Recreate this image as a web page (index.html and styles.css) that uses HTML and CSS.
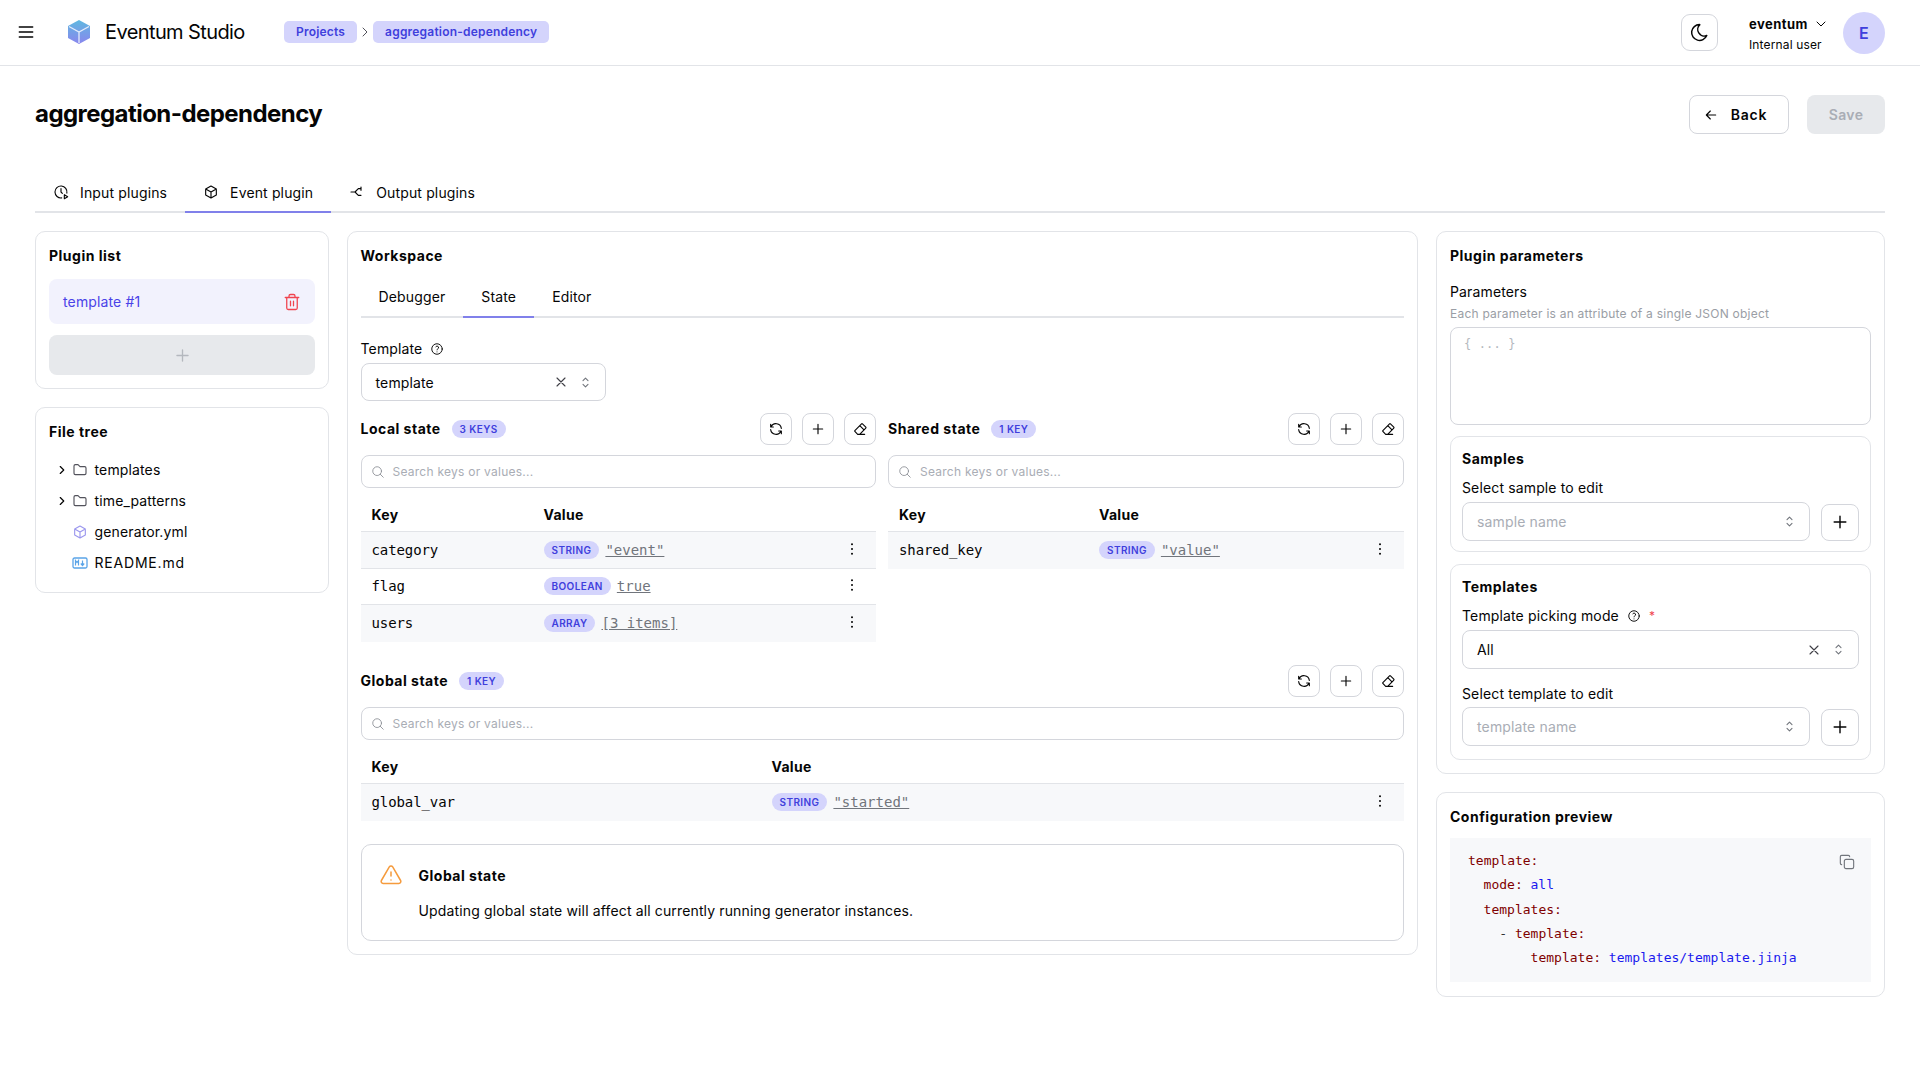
FILE: index.html
```html
<!DOCTYPE html>
<html lang="en">
<head>
<meta charset="utf-8">
<title>Eventum Studio</title>
<link rel="stylesheet" href="styles.css">
</head>
<body>

<!-- icon set -->
<svg class="defs" width="0" height="0">
  <defs>
    <linearGradient id="cube-grad" x1="0" y1="0" x2="0" y2="1">
      <stop offset="0" stop-color="#5fb8e0"/>
      <stop offset="1" stop-color="#8a86ee"/>
    </linearGradient>
  </defs>
  <symbol id="i-plus" viewBox="0 0 24 24"><path d="M12 5v14M5 12h14"/></symbol>
  <symbol id="i-refresh" viewBox="0 0 24 24"><path d="M20 11a8.100 8.100 0 0 0-15.500-2M4 5v4h4M4 13a8.100 8.100 0 0 0 15.500 2M20 19v-4h-4"/></symbol>
  <symbol id="i-eraser" viewBox="0 0 24 24"><path d="M19 20H8.500l-4.210-4.300a1 1 0 0 1 0-1.410l10-10a1 1 0 0 1 1.410 0l5 5a1 1 0 0 1 0 1.410L11.500 20M18 13.300 11.700 7"/></symbol>
  <symbol id="i-search" viewBox="0 0 24 24"><circle cx="10.500" cy="10.500" r="7.500"/><path d="m21 21-5.200-5.200"/></symbol>
  <symbol id="i-dots" viewBox="0 0 24 24"><circle cx="12" cy="5" r="1.500"/><circle cx="12" cy="12" r="1.500"/><circle cx="12" cy="19" r="1.500"/></symbol>
  <symbol id="i-x" viewBox="0 0 24 24"><path d="M6 6l12 12M18 6 6 18"/></symbol>
  <symbol id="i-updown" viewBox="0 0 24 24"><path d="m8 9 4-4 4 4M16 15l-4 4-4-4"/></symbol>
  <symbol id="i-help" viewBox="0 0 24 24"><circle cx="12" cy="12" r="9"/><path d="M12 17v.01M12 13.500a1.500 1.500 0 0 1 1-1.500 2.600 2.600 0 1 0-3-4"/></symbol>
  <symbol id="i-chev" viewBox="0 0 24 24"><path d="m9 6 6 6-6 6"/></symbol>
  <symbol id="i-folder" viewBox="0 0 24 24"><path d="M5 4h4l3 3h7a2 2 0 0 1 2 2v8a2 2 0 0 1-2 2H5a2 2 0 0 1-2-2V6a2 2 0 0 1 2-2"/></symbol>
  <symbol id="i-box" viewBox="0 0 24 24"><path d="m12 3 8 4.500v9L12 21l-8-4.500v-9zM12 12l8-4.500M12 12v9M12 12 4 7.500"/></symbol>
</svg>

<header class="topbar">
  <svg class="ic ic-menu" viewBox="0 0 24 24"><path d="M4 6h16M4 12h16M4 18h16"/></svg>
  <svg class="logo" viewBox="0 0 24 26">
    <path d="M12 1 23 7v12l-11 6L1 19V7z" fill="url(#cube-grad)"/>
    <path d="M2 7.500 12 13l10-5.500M12 13v11" fill="none" stroke="#e4ecfb" stroke-width="1.300"/>
  </svg>
  <span class="brand">Eventum Studio</span>
  <nav class="crumbs">
    <span class="crumb">Projects</span>
    <svg class="ic ic-crumb"><use href="#i-chev"/></svg>
    <span class="crumb">aggregation-dependency</span>
  </nav>
  <div class="topbar-right">
    <button class="icon-btn moon">
      <svg class="ic ic-moon" viewBox="0 0 24 24"><path d="M12 3h.393a7.500 7.500 0 0 0 7.920 12.446A9 9 0 1 1 12 2.992z"/></svg>
    </button>
    <div class="user">
      <div class="user-name">eventum
        <svg class="ic ic-small" viewBox="0 0 24 24"><path d="m6 9 6 6 6-6"/></svg>
      </div>
      <div class="user-role">Internal user</div>
    </div>
    <div class="avatar">E</div>
  </div>
</header>

<main class="page">
  <div class="title-row">
    <h1>aggregation-dependency</h1>
    <div class="title-actions">
      <button class="btn btn-back">
        <svg class="ic ic-back" viewBox="0 0 24 24"><path d="M5 12h14M5 12l6 6M5 12l6-6"/></svg>
        Back
      </button>
      <button class="btn btn-save">Save</button>
    </div>
  </div>

  <div class="tabs page-tabs">
    <div class="tab">
      <svg class="ic" viewBox="0 0 24 24"><path d="M12 7v5l2 2M17 22l5-3-5-3zM13 20.900a9 9 0 1 1 7.800-7.300"/></svg>
      Input plugins
    </div>
    <div class="tab active">
      <svg class="ic"><use href="#i-box"/></svg>
      Event plugin
    </div>
    <div class="tab">
      <svg class="ic" viewBox="0 0 24 24"><path d="M3 12h6l5-5M9 12l5 5M14 7h4M18 4.500v5M14 17h4"/></svg>
      Output plugins
    </div>
  </div>

  <div class="columns">
    <aside class="col-left">
      <section class="card">
        <h2>Plugin list</h2>
        <div class="plugin-item">
          <span>template #1</span>
          <svg class="ic ic-trash" viewBox="0 0 24 24"><path d="M3 6h18M19 6v14a2 2 0 0 1-2 2H7a2 2 0 0 1-2-2V6M8 6V4a2 2 0 0 1 2-2h4a2 2 0 0 1 2 2v2M10 11v6M14 11v6"/></svg>
        </div>
        <div class="plugin-add"><svg class="ic ic-add"><use href="#i-plus"/></svg></div>
      </section>

      <section class="card">
        <h2>File tree</h2>
        <ul class="tree">
          <li><svg class="ic ic-chev"><use href="#i-chev"/></svg><svg class="ic ic-folder"><use href="#i-folder"/></svg>templates</li>
          <li><svg class="ic ic-chev"><use href="#i-chev"/></svg><svg class="ic ic-folder"><use href="#i-folder"/></svg>time_patterns</li>
          <li class="leaf"><svg class="ic ic-file"><use href="#i-box"/></svg>generator.yml</li>
          <li class="leaf readme">
            <svg class="ic-md" viewBox="0 0 16 16">
              <rect x="1" y="3" width="14" height="10" rx="1.500" fill="none" stroke="#5aa4e8" stroke-width="1.300"/>
              <path d="M3.500 10.500v-5l1.500 2 1.500-2v5M10.500 5.500v4.500M8.800 8.500l1.700 2 1.700-2" fill="none" stroke="#5aa4e8" stroke-width="1.200"/>
            </svg>README.md
          </li>
        </ul>
      </section>
    </aside>

    <section class="card col-main">
      <h2>Workspace</h2>
      <div class="tabs inner-tabs">
        <div class="tab">Debugger</div>
        <div class="tab active">State</div>
        <div class="tab">Editor</div>
      </div>

      <div class="field-label template-label">Template <svg class="ic ic-help"><use href="#i-help"/></svg></div>
      <div class="select template-select">
        <span>template</span>
        <svg class="ic ic-x"><use href="#i-x"/></svg>
        <svg class="ic ic-updown"><use href="#i-updown"/></svg>
      </div>

      <div class="state-pair">
        <div class="state">
          <div class="state-head">
            <h3>Local state</h3><span class="chip">3 KEYS</span>
            <div class="state-tools">
              <button class="icon-btn"><svg class="ic"><use href="#i-refresh"/></svg></button>
              <button class="icon-btn"><svg class="ic"><use href="#i-plus"/></svg></button>
              <button class="icon-btn"><svg class="ic"><use href="#i-eraser"/></svg></button>
            </div>
          </div>
          <div class="search"><svg class="ic ic-search"><use href="#i-search"/></svg>Search keys or values...</div>
          <div class="kv cols-local">
            <div class="kv-head"><b>Key</b><b>Value</b></div>
            <div class="kv-row"><code>category</code><div class="val"><span class="chip">STRING</span><a>"event"</a></div><svg class="ic ic-dots"><use href="#i-dots"/></svg></div>
            <div class="kv-row"><code>flag</code><div class="val"><span class="chip">BOOLEAN</span><a>true</a></div><svg class="ic ic-dots"><use href="#i-dots"/></svg></div>
            <div class="kv-row"><code>users</code><div class="val"><span class="chip">ARRAY</span><a>[3 items]</a></div><svg class="ic ic-dots"><use href="#i-dots"/></svg></div>
          </div>
        </div>

        <div class="state">
          <div class="state-head">
            <h3>Shared state</h3><span class="chip">1 KEY</span>
            <div class="state-tools">
              <button class="icon-btn"><svg class="ic"><use href="#i-refresh"/></svg></button>
              <button class="icon-btn"><svg class="ic"><use href="#i-plus"/></svg></button>
              <button class="icon-btn"><svg class="ic"><use href="#i-eraser"/></svg></button>
            </div>
          </div>
          <div class="search"><svg class="ic ic-search"><use href="#i-search"/></svg>Search keys or values...</div>
          <div class="kv cols-shared">
            <div class="kv-head"><b>Key</b><b>Value</b></div>
            <div class="kv-row"><code>shared_key</code><div class="val"><span class="chip">STRING</span><a>"value"</a></div><svg class="ic ic-dots"><use href="#i-dots"/></svg></div>
          </div>
        </div>
      </div>

      <div class="state state-global">
        <div class="state-head">
          <h3>Global state</h3><span class="chip">1 KEY</span>
          <div class="state-tools">
            <button class="icon-btn"><svg class="ic"><use href="#i-refresh"/></svg></button>
            <button class="icon-btn"><svg class="ic"><use href="#i-plus"/></svg></button>
            <button class="icon-btn"><svg class="ic"><use href="#i-eraser"/></svg></button>
          </div>
        </div>
        <div class="search"><svg class="ic ic-search"><use href="#i-search"/></svg>Search keys or values...</div>
        <div class="kv cols-global">
          <div class="kv-head"><b>Key</b><b>Value</b></div>
          <div class="kv-row"><code>global_var</code><div class="val"><span class="chip">STRING</span><a>"started"</a></div><svg class="ic ic-dots"><use href="#i-dots"/></svg></div>
        </div>
      </div>

      <div class="alert">
        <svg class="ic ic-warn" viewBox="0 0 24 24"><path d="M12 9v4M12 17v.01M10.300 3.900 2.400 17.500A2 2 0 0 0 4.100 20.500h15.800a2 2 0 0 0 1.700-3L13.700 3.900a2 2 0 0 0-3.400 0z"/></svg>
        <div>
          <h3>Global state</h3>
          <p>Updating global state will affect all currently running generator instances.</p>
        </div>
      </div>
    </section>

    <aside class="col-right">
      <section class="card">
        <h2>Plugin parameters</h2>
        <div class="field-label params-label">Parameters</div>
        <div class="field-desc">Each parameter is an attribute of a single JSON object</div>
        <div class="textarea">{ ... }</div>

        <div class="subcard samples">
          <h3>Samples</h3>
          <div class="field-label">Select sample to edit</div>
          <div class="select-row">
            <div class="select placeholder"><span>sample name</span><svg class="ic ic-updown"><use href="#i-updown"/></svg></div>
            <button class="icon-btn add-btn"><svg class="ic"><use href="#i-plus"/></svg></button>
          </div>
        </div>

        <div class="subcard templates">
          <h3>Templates</h3>
          <div class="field-label">Template picking mode <svg class="ic ic-help"><use href="#i-help"/></svg><span class="req">*</span></div>
          <div class="select">
            <span>All</span>
            <svg class="ic ic-x"><use href="#i-x"/></svg>
            <svg class="ic ic-updown"><use href="#i-updown"/></svg>
          </div>
          <div class="field-label second">Select template to edit</div>
          <div class="select-row">
            <div class="select placeholder"><span>template name</span><svg class="ic ic-updown"><use href="#i-updown"/></svg></div>
            <button class="icon-btn add-btn"><svg class="ic"><use href="#i-plus"/></svg></button>
          </div>
        </div>
      </section>

      <section class="card card-preview">
        <h2>Configuration preview</h2>
        <div class="code">
          <svg class="ic ic-copy" viewBox="0 0 24 24"><rect x="8" y="8" width="14" height="14" rx="2.500"/><path d="M4 16a2 2 0 0 1-2-2V4a2 2 0 0 1 2-2h10a2 2 0 0 1 2 2"/></svg>
          <div class="line"><span class="k">template:</span></div>
          <div class="line ind1"><span class="k">mode:</span><span class="v">all</span></div>
          <div class="line ind1"><span class="k">templates:</span></div>
          <div class="line ind2"><span class="dash">-</span><span class="k">template:</span></div>
          <div class="line ind3"><span class="k">template:</span><span class="v">templates/template.jinja</span></div>
        </div>
      </section>
    </aside>
  </div>
</main>

</body>
</html>
```

FILE: styles.css
```css
* { box-sizing: border-box; }

body {
  margin: 0;
  background: #fff;
  color: #050505;
  font-family: Inter, "Liberation Sans", sans-serif;
  font-size: 14px;
  letter-spacing: 0.14px;
}

.defs { display: block; height: 0; }

.ic {
  width: 16px;
  height: 16px;
  flex: none;
  fill: none;
  stroke: currentColor;
  stroke-width: 1.7;
  stroke-linecap: round;
  stroke-linejoin: round;
}

/* top bar */
.topbar {
  height: 66px;
  padding: 0 35px 0 16px;
  border-bottom: 1px solid #e2e4e8;
  display: flex;
  align-items: center;
}
.ic-menu { width: 20px; height: 20px; stroke-width: 1.8; margin-top: -1px; }
.logo { width: 24px; height: 26px; margin: -2px 0 0 31px; }
.brand { font-size: 20px; margin: -2px 0 0 14px; letter-spacing: -0.6px; width: 128px; white-space: nowrap; }
.crumbs { display: flex; align-items: center; margin: -2px 0 0 51px; }
.crumb {
  background: #d4d4fc;
  color: #3f3fdc;
  font-size: 12px;
  font-weight: 600;
  letter-spacing: 0.2px;
  height: 22px;
  line-height: 22px;
  padding: 0 12px;
  border-radius: 5px;
}
.ic-crumb { width: 16px; height: 16px; margin: 0; color: #52525b; stroke-width: 1.5; }
.topbar-right { margin-left: auto; display: flex; align-items: center; }
.icon-btn {
  width: 32px;
  height: 32px;
  padding: 0;
  background: #fff;
  border: 1px solid #d4d6dc;
  border-radius: 8px;
  display: flex;
  align-items: center;
  justify-content: center;
  color: #050505;
}
.moon { width: 37px; height: 37px; border-radius: 9px; margin-top: -1px; }
.ic-moon { width: 21px; height: 21px; }
.user { margin-left: 31px; width: 85px; font-size: 12px; }
.user-name { font-weight: 700; font-size: 13px; letter-spacing: 0.45px; display: flex; align-items: center; gap: 5px; height: 20px; }
.ic-small { width: 16px; height: 16px; stroke-width: 1.5; }
.user-role { margin-top: 3px; }
.avatar {
  width: 42px;
  height: 42px;
  margin-left: 9px;
  border-radius: 50%;
  background: #d4d4fc;
  color: #3f3fdc;
  font-weight: 600;
  font-size: 16px;
  display: flex;
  align-items: center;
  justify-content: center;
}

/* page head */
.page { padding: 0 35px; }
.title-row {
  display: flex;
  align-items: flex-start;
  justify-content: space-between;
  padding-top: 29px;
  height: 106px;
}
h1 { margin: 0; font-size: 24px; font-weight: 700; line-height: 38px; letter-spacing: -0.55px; }
.title-actions { display: flex; gap: 18px; }
.btn {
  height: 39px;
  border-radius: 8px;
  font: inherit;
  font-weight: 600;
  letter-spacing: 0.4px;
  display: flex;
  align-items: center;
  justify-content: center;
}
.btn-back { width: 100px; background: #fff; border: 1px solid #d4d6dc; color: #050505; gap: 12px; padding: 0 8px 0 0; letter-spacing: 0.8px; }
.ic-back { width: 16px; height: 16px; }
.btn-save { width: 78px; background: #e7e9ec; border: 0; color: #a9adb5; }

/* tabs */
.tabs { display: flex; border-bottom: 2px solid #e2e4e8; }
.tab {
  display: flex;
  align-items: center;
  gap: 11px;
  padding: 1px 18px 0;
  margin-bottom: -2px;
  border-bottom: 2px solid transparent;
}
.tab.active { border-bottom-color: #8080ea; }
.page-tabs { height: 41px; }
.inner-tabs { height: 42px; margin-top: 10px; }

.columns {
  margin-top: 18px;
  display: grid;
  grid-template-columns: 294px 1072px 449px;
  gap: 17.500px;
  align-items: start;
}
.col-left, .col-right { display: flex; flex-direction: column; gap: 18px; }
.col-main { margin-right: 1px; }

.card {
  border: 1px solid #e2e4e8;
  border-radius: 10px;
  padding: 14px 13px 13px;
}
h2 { margin: 0; font-size: 14px; font-weight: 700; line-height: 20px; letter-spacing: 0.5px; }
h3 { margin: 0; font-size: 14px; font-weight: 700; line-height: 20px; letter-spacing: 0.5px; }

/* left */
.plugin-item {
  margin-top: 13px;
  height: 45px;
  padding: 0 14px;
  background: #f2f2fd;
  border-radius: 8px;
  color: #4a42e8;
  display: flex;
  align-items: center;
  justify-content: space-between;
}
.ic-trash { width: 18px; height: 18px; color: #f0444f; }
.plugin-add {
  margin-top: 11px;
  height: 40px;
  background: #e7e9ec;
  border-radius: 8px;
  display: flex;
  align-items: center;
  justify-content: center;
}
.ic-add { width: 19px; height: 19px; color: #b4b8be; }

.tree { list-style: none; margin: 12px 0 1px; padding: 0 0 0 6px; }
.tree li { height: 31px; display: flex; align-items: center; white-space: nowrap; }
.ic-chev { width: 14px; height: 14px; stroke-width: 2; margin-right: 3px; }
.ic-folder { width: 16px; height: 16px; margin-right: 6.500px; color: #52525b; }
.leaf { padding-left: 17px; }
.tree .readme { letter-spacing: 0.8px; }
.ic-file { width: 16px; height: 16px; margin-right: 6.500px; color: #9b97ee; }
.ic-md { width: 16px; height: 16px; margin-right: 6.500px; }

/* main */
.field-label { line-height: 20px; display: flex; align-items: center; gap: 8px; }
.template-label { margin-top: 21px; }
.ic-help { width: 14px; height: 14px; stroke-width: 1.6; }
.req { color: #f0444f; font-size: 12px; }

.select {
  height: 39px;
  padding: 0 12px 0 14px;
  border: 1px solid #d4d6dc;
  border-radius: 8px;
  display: flex;
  align-items: center;
  gap: 9px;
  background: #fff;
}
.select span { flex: 1; }
.select.placeholder { color: #a9adb5; }
.template-select { width: 245px; height: 38px; margin-top: 4px; }
.ic-x { width: 16px; height: 16px; color: #3f3f46; }
.ic-updown { width: 15px; height: 15px; color: #71757c; }

.state-pair { display: grid; grid-template-columns: 1fr 1fr; gap: 12px; margin-top: 11px; }
.state-head { display: flex; align-items: center; height: 33px; }
.chip {
  background: #d4d4fc;
  color: #3f3fdc;
  font-size: 10px;
  font-weight: 600;
  letter-spacing: 0.4px;
  line-height: 18px;
  height: 18px;
  padding: 0 8px;
  border-radius: 9px;
}
.state-head .chip { margin-left: 11px; }
.state-tools { margin-left: auto; display: flex; gap: 10px; }
.search {
  margin-top: 10px;
  height: 33px;
  border: 1px solid #d4d6dc;
  border-radius: 8px;
  padding: 0 9px;
  display: flex;
  align-items: center;
  gap: 8px;
  color: #a9adb5;
  font-size: 12px;
  letter-spacing: 0.25px;
}
.ic-search { width: 14px; height: 14px; color: #8b8f96; stroke-width: 1.5; }

.kv { margin-top: 8px; }
.kv-head, .kv-row { display: grid; align-items: center; padding: 0 10px 0 11px; }
.cols-local .kv-head, .cols-local .kv-row { grid-template-columns: 172px 1fr 36px; }
.cols-shared .kv-head, .cols-shared .kv-row { grid-template-columns: 200px 1fr 36px; }
.cols-global .kv-head, .cols-global .kv-row { grid-template-columns: 400px 1fr 36px; }
.kv-head { height: 36px; padding-top: 1px; border-bottom: 1px solid #e2e4e8; }
.kv-head b { letter-spacing: 0.3px; }
.kv-row { height: 36.500px; border-bottom: 1px solid #e2e4e8; }
.kv-row:nth-child(even) { background: #f7f8fa; }
.kv-row:last-child { border-bottom: 0; }
code { font-family: "DejaVu Sans Mono", monospace; font-size: 14px; letter-spacing: -0.1px; }
.val { display: flex; align-items: center; gap: 6px; }
.val a {
  font-family: "DejaVu Sans Mono", monospace;
  font-size: 14px;
  letter-spacing: 0;
  color: #71757c;
  text-decoration: underline;
}
.ic-dots { width: 16px; height: 16px; fill: #050505; stroke: none; margin: -2px 6px 0 0; justify-self: end; }

.state-global { margin-top: 22.500px; }

.alert {
  margin-top: 23px;
  height: 97px;
  padding: 21px 16px 0 17px;
  border: 1px solid #d4d6dc;
  border-radius: 10px;
  display: flex;
  gap: 16px;
}
.ic-warn { width: 24px; height: 24px; color: #f59b3d; stroke-width: 1.5; margin-top: -3px; }
.alert p { margin: 15px 0 0; line-height: 20px; }

/* right */
.params-label { margin-top: 16px; }
.field-desc { margin-top: 2px; font-size: 12px; line-height: 20px; letter-spacing: 0.23px; color: #9a9ea5; }
.textarea {
  margin-top: 3px;
  height: 98px;
  padding: 9px 13px;
  border: 1px solid #d4d6dc;
  border-radius: 8px;
  color: #b4b8be;
  font-family: "DejaVu Sans Mono", monospace;
  font-size: 12px;
}
.subcard {
  margin-top: 12px;
  padding: 12px 11px;
  border: 1px solid #e2e4e8;
  border-radius: 10px;
}
.textarea + .subcard { margin-top: 11px; }
.subcard h3 + .field-label { margin-top: 9px; margin-bottom: 4px; }
.samples { height: 116px; }
.templates { height: 196px; }
.second { margin-top: 15px; margin-bottom: 3px; }
.select-row { display: flex; align-items: center; gap: 11px; }
.select-row .select { flex: 1; }
.add-btn { width: 38px; height: 37px; margin-top: 1px; }
.add-btn .ic { width: 20px; height: 20px; }

.card-preview { padding-bottom: 14px; }
.code {
  position: relative;
  margin-top: 11px;
  padding: 11px 18px;
  height: 144px;
  background: #f7f8fa;
  font-family: "DejaVu Sans Mono", monospace;
  font-size: 13px;
  letter-spacing: 0;
}
.line { height: 24.300px; line-height: 24.300px; display: flex; gap: 7.800px; }
.ind1 { padding-left: 15.600px; }
.ind2 { padding-left: 31.300px; }
.ind3 { padding-left: 62.600px; }
.k { color: #800000; }
.v { color: #1a1aee; }
.dash { color: #333; }
.ic-copy { position: absolute; top: 16px; right: 16px; color: #71757c; width: 16px; height: 16px; }
```
